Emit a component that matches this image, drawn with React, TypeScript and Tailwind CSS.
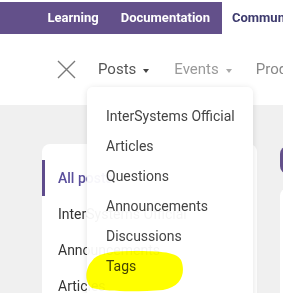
import React from "react";

const postTypes = [
  "InterSystems Official",
  "Articles",
  "Questions",
  "Announcements",
  "Discussions",
  "Tags",
];

const sideLinks = ["All posts", "InterSystems Official", "Announcements", "Articles"];

function Caret({ color }: { color: string }) {
  return (
    <svg width="6" height="4" viewBox="0 0 6 4" className="ml-[7px] mt-[2px]">
      <path d="M0 0 L6 0 L3 4 Z" fill={color} />
    </svg>
  );
}

export default function App() {
  return (
    <div className="relative w-[283px] h-[293px] overflow-hidden bg-[#f0f0f0] font-['Roboto',sans-serif]">
      {/* Top bar */}
      <div className="h-[2px] bg-white" />
      <div className="flex h-[32px]">
        <div className="w-[222px] bg-[#63508a] flex items-center justify-end gap-[22px] pr-[12px] text-[13px] font-bold text-white">
          <span>Learning</span>
          <span>Documentation</span>
        </div>
        <div className="flex-1 bg-white flex items-center pl-[10px] text-[13px] font-bold text-[#3d3a6d] whitespace-nowrap overflow-hidden">
          Community
        </div>
      </div>

      {/* Section nav */}
      <div className="h-[71px] bg-white flex items-center pl-[57px] whitespace-nowrap text-[15px]">
        <svg width="19" height="19" viewBox="0 0 19 19" className="shrink-0">
          <path d="M1 1 L18 18 M18 1 L1 18" stroke="#7a7a7a" strokeWidth="1.4" />
        </svg>
        <div className="relative ml-[22px] h-[20px] flex items-center text-[#555]">
          Posts
          <Caret color="#444" />
          <div className="absolute left-[-11px] top-[27px] w-[166px] h-[230px] z-10 bg-white/95 rounded-md shadow-[0_1px_6px_rgba(0,0,0,0.12)] pt-[15px]">
            {postTypes.map((t) => (
              <div key={t} className="h-[30px] flex items-center pl-[19px] text-[14px] text-[#444]">
                {t}
              </div>
            ))}
          </div>
        </div>
        <div className="ml-[25px] h-[20px] flex items-center text-[#9a9a9a]">
          Events
          <Caret color="#aaa" />
        </div>
        <div className="ml-[24px] h-[20px] flex items-center text-[#888]">Products</div>
      </div>

      {/* Page body */}
      <div className="flex gap-[23px] pl-[42px] pt-[39px]">
        <div className="w-[215px] shrink-0 h-[200px] bg-white rounded-tl-lg rounded-tr-lg pt-[16px] text-[14px] whitespace-nowrap">
          {sideLinks.map((l, i) => (
            <div
              key={l}
              className={
                i === 0
                  ? "h-[36px] flex items-center border-l-[3px] border-[#5e4b8c] pl-[13px] font-medium text-[#5a4f9c]"
                  : "h-[36px] flex items-center pl-[16px] text-[#333]"
              }
            >
              {l}
            </div>
          ))}
        </div>
        <div className="w-[60px] shrink-0 flex flex-col">
          <div className="mt-[2px] h-[28px] bg-[#63508a] rounded-lg" />
          <div className="mt-[14px] h-[200px] bg-white rounded-lg" />
        </div>
      </div>

      {/* Highlighter mark */}
      <svg
        width="283"
        height="293"
        viewBox="0 0 283 293"
        className="absolute left-0 top-0 z-20 pointer-events-none mix-blend-multiply"
      >
        <path
          d="M92 261 C96 254 110 251 130 251 C155 251 176 251 181 260 C186 272 182 287 163 290 C138 292 108 292 92 288 C84 283 85 268 92 261 Z"
          fill="#ffff00"
        />
      </svg>
    </div>
  );
}
